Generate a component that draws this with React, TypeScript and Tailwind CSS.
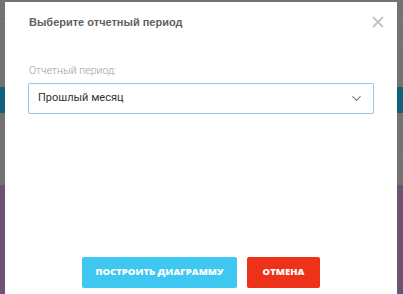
import { ChevronDown, X } from "lucide-react";

export default function App() {
  return (
    <div className="relative h-[294px] w-[403px] overflow-hidden bg-[#737373]">
      {/* page behind the overlay */}
      <div className="flex h-full flex-col">
        <div className="h-[22px] border-b border-[#7b7b7b]" />
        <div className="h-[25px] border-b border-[#7a7a7a]" />
        <div className="h-[40px]" />
        <div className="h-[26px] bg-[#13607a]" />
        <div className="h-[44px] border-b border-[#7a7a7a]" />
        <div className="h-[28px]" />
        <div className="flex-1 bg-[#6c5273]" />
      </div>

      {/* modal */}
      <div className="absolute left-[5px] top-[2px] h-[300px] w-[392px] bg-white px-[23px] pt-[10px] font-['Roboto',sans-serif]">
        <button
          type="button"
          className="absolute right-[10px] top-[11px] text-[#c4c4c4]"
        >
          <X size={18} strokeWidth={2.6} />
        </button>

        <h2 className="pl-px text-[11px] leading-5 font-bold text-[#5f5f5f] font-['Liberation_Sans',Arial,sans-serif]">
          Выберите отчетный период
        </h2>

        <div className="mt-[31px] pl-px text-[10.5px] leading-4 font-light text-[#9a9a9a]">
          Отчетный период:
        </div>

        <div className="mt-1 flex h-[31px] w-[346px] items-center justify-between rounded-[2px] border border-[#9cc7dd] pl-[9px] pr-[9px]">
          <span className="text-[11px] text-[#333]">Прошлый месяц</span>
          <ChevronDown size={15} strokeWidth={1.8} className="text-[#777]" />
        </div>

        <div className="mt-[143px] flex justify-center gap-[10px] font-['Open_Sans',sans-serif]">
          <button
            type="button"
            className="h-[31px] w-[155px] rounded-[2px] bg-[#3ec7f1] text-[9.5px] font-extrabold text-white"
          >
            ПОСТРОИТЬ ДИАГРАММУ
          </button>
          <button
            type="button"
            className="h-[31px] w-[73px] rounded-[2px] bg-[#ee3219] text-[9.5px] font-extrabold text-white"
          >
            ОТМЕНА
          </button>
        </div>
      </div>
    </div>
  );
}
